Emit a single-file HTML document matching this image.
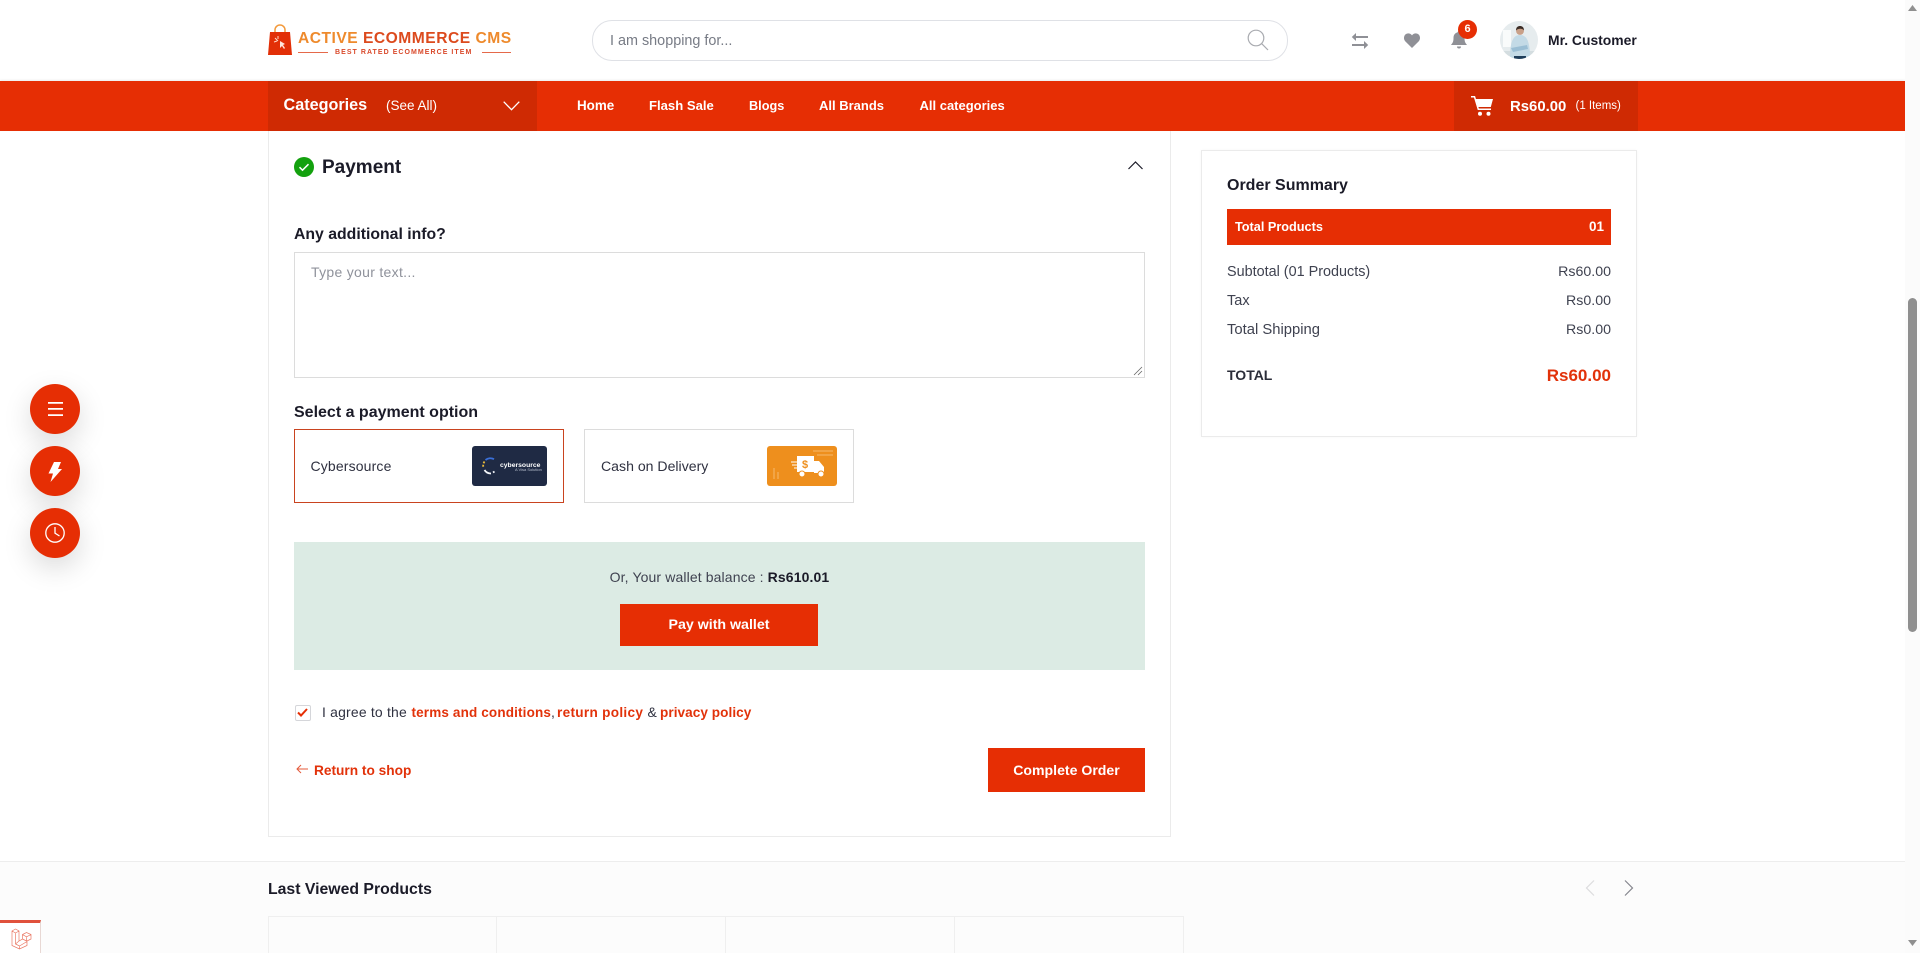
<!DOCTYPE html>
<html lang="en">
<head>
<meta charset="utf-8">
<title>Checkout Payment</title>
<style>
html,body{margin:0;padding:0;width:1920px;height:953px;overflow:hidden;background:#fff}
body{position:relative;font-family:"Liberation Sans",sans-serif;color:#1b1b28}
.a,.t{position:absolute}
.t{white-space:nowrap;line-height:20px;height:20px}
.b{font-weight:700}
.w{color:#fff}
.r{color:#e2320a}
.g{color:#3f4250}
svg{display:block;overflow:visible}
</style>
</head>
<body>
<!-- header -->
<svg class="a" style="left:268px;top:24px" width="24" height="32" viewBox="0 0 24 32">
<path d="M7 9V6a5 5 0 0 1 10 0v3" fill="none" stroke="#f39a3c" stroke-width="1.5"/>
<path d="M2 8h20l2 23H0z" fill="#e22f07"/>
<path d="M7 14l3 3M10 12v3M6 18l3-1" stroke="#ffd9c9" stroke-width="1"/>
<path d="M12 17l5 3-2 1 2 3-1 1-2-3-2 2z" fill="#ffe6dc"/>
</svg>
<div class="t b" style="left:298px;top:29px;font-size:15.6px;letter-spacing:.5px;color:#ee8a2c">ACTIVE <span style="color:#dc4a1d">ECOMMERCE</span> CMS</div>
<div class="a" style="left:298px;top:52px;width:30px;height:1px;background:#e5694a"></div>
<div class="a" style="left:482px;top:52px;width:29px;height:1px;background:#e5694a"></div>
<div class="t b" style="left:335px;top:43px;font-size:7px;letter-spacing:1.05px;color:#d9492b">BEST RATED ECOMMERCE ITEM</div>

<div class="a" style="left:592px;top:20px;width:694px;height:39px;border:1px solid #dfe1e6;border-radius:20px;box-sizing:content-box"></div>
<div class="t" style="left:610px;top:31px;font-size:14.4px;color:#777b85">I am shopping for...</div>
<svg class="a" style="left:1247px;top:29px" width="22" height="22" viewBox="0 0 22 22" fill="none" stroke="#a9abb0" stroke-width="1.2"><circle cx="9" cy="9" r="7.8"/><path d="M14.6 14.6L21 21"/></svg>

<svg class="a" style="left:1351px;top:32px" width="18" height="18" viewBox="0 0 18 18" fill="#8f9096"><path d="M5 1v3h12v2H5v3L.8 5zM13 9v3H1v2h12v3l4.2-4z"/></svg>
<svg class="a" style="left:1404px;top:33px" width="16" height="15" viewBox="0 0 16 15" fill="#8f9096"><path d="M8 15L1.2 8.2C-.6 6.200-.3 3 1.500 1.400 3.600-.4 6.500.2 8 2.400 9.500.2 12.400-.4 14.500 1.400c1.800 1.600 2.100 4.800.3 6.800z"/></svg>
<svg class="a" style="left:1451px;top:31px" width="16" height="19" viewBox="0 0 16 19" fill="#8f9096"><path d="M8 0c.8 0 1.300.6 1.300 1.300C12 2 13.500 4 13.500 7c0 4 1 5 2.500 7H0c1.500-2 2.500-3 2.500-7 0-3 1.500-5 4.200-5.700C6.700.6 7.200 0 8 0zM6 15.500h4a2 2 0 0 1-4 0z"/></svg>
<div class="a" style="left:1458px;top:20px;width:19px;height:19px;border-radius:50%;background:#e62e04"></div>
<div class="a b w" style="left:1458px;top:20px;width:19px;height:19px;line-height:19px;text-align:center;font-size:11px">6</div>

<svg class="a" style="left:1500px;top:21px" width="38" height="38" viewBox="0 0 38 38">
<defs><clipPath id="av"><circle cx="19" cy="19" r="19"/></clipPath></defs>
<g clip-path="url(#av)">
<rect width="38" height="38" fill="#e6ecee"/>
<rect x="3" y="9" width="8" height="17" fill="#f9fbfb"/>
<rect x="0" y="30" width="38" height="8" fill="#d4dde0"/>
<path d="M10 38c0-15 2-24 10-24s10 9 10 24z" fill="#c3dae6"/>
<path d="M11 27l16-3 1 4-15 3z" fill="#9abed4"/>
<circle cx="20" cy="10" r="3.900" fill="#c9a088"/>
<path d="M16 9.500c0-3.500 2-4.500 4-4.500s4 1 4 4.500c-1-1.500-3-1.700-4-1.700s-3 .4-4 1.700z" fill="#3b2c25"/>
<rect x="14" y="35" width="12" height="3" fill="#1e3d5a"/>
</g></svg>
<div class="t b" style="left:1548px;top:30px;font-size:13.9px">Mr. Customer</div>

<!-- nav -->
<div class="a" style="left:0;top:81px;width:1905px;height:50px;background:#e62e04;box-shadow:0 -1px 2px rgba(0,0,0,.08)"></div>
<div class="a" style="left:268px;top:81px;width:269px;height:50px;background:#cf2a03"></div>
<div class="a" style="left:1454px;top:81px;width:184px;height:50px;background:#cf2a03"></div>
<div class="t b w" style="left:283.500px;top:95px;font-size:16.200px">Categories</div>
<div class="t w" style="left:386px;top:96px;font-size:13.500px">(See All)</div>
<svg class="a" style="left:503px;top:101px" width="17" height="10" viewBox="0 0 17 10" fill="none" stroke="#fff" stroke-width="1.300"><path d="M.7.7l7.800 8 7.800-8"/></svg>
<div class="t b w" style="left:577px;top:96px;font-size:13.400px">Home</div>
<div class="t b w" style="left:649px;top:96px;font-size:13.100px">Flash Sale</div>
<div class="t b w" style="left:749px;top:96px;font-size:12.700px">Blogs</div>
<div class="t b w" style="left:819px;top:96px;font-size:13px">All Brands</div>
<div class="t b w" style="left:919.500px;top:96px;font-size:13px">All categories</div>
<svg class="a" style="left:1470.500px;top:96px" width="22" height="20" viewBox="0 0 22 20"><path d="M0 .8h3.500l3.800 12.400H20" fill="none" stroke="#fff" stroke-width="1.500"/><path d="M4.700 3H22l-2.200 8H7.200z" fill="#fff"/><circle cx="9" cy="17.800" r="2" fill="#fff"/><circle cx="17.500" cy="17.800" r="2" fill="#fff"/></svg>
<div class="t b w" style="left:1510px;top:96.500px;font-size:14.900px">Rs60.00</div>
<div class="t w" style="left:1575.500px;top:96px;font-size:11.500px">(1 Items)</div>

<!-- main card -->
<div class="a" style="left:268px;top:131px;width:901px;height:705px;border:1px solid #ebebeb;border-top:0"></div>
<svg class="a" style="left:294px;top:157px" width="20" height="20" viewBox="0 0 20 20"><circle cx="10" cy="10" r="10" fill="#13a10e"/><path d="M5.500 10.200l3 3 6-6" fill="none" stroke="#fff" stroke-width="1.500"/></svg>
<div class="t b" style="left:322px;top:158px;font-size:19px">Payment</div>
<svg class="a" style="left:1128px;top:161px" width="15" height="9" viewBox="0 0 15 9" fill="none" stroke="#1b1b28" stroke-width="1.200"><path d="M.5 8L7.500 1l7 7"/></svg>
<div class="t b" style="left:294px;top:225px;font-size:15.800px">Any additional info?</div>
<div class="a" style="left:294px;top:252px;width:849px;height:124px;border:1px solid #dcdcdc"></div>
<div class="t" style="left:311px;top:262px;font-size:14px;letter-spacing:.3px;color:#8f929b">Type your text...</div>
<svg class="a" style="left:1134px;top:367px" width="8" height="8" viewBox="0 0 8 8" stroke="#666" stroke-width=".8"><path d="M0 8L8 0M4 8L8 4"/></svg>
<div class="t b" style="left:294px;top:403px;font-size:16px">Select a payment option</div>

<div class="a" style="left:294px;top:429px;width:268px;height:72px;border:1px solid #c9431f"></div>
<div class="t" style="left:310.500px;top:456px;font-size:14px;letter-spacing:.15px;color:#2f3140">Cybersource</div>
<div class="a" style="left:472px;top:446px;width:75px;height:40px;border-radius:3px;background:#1f2a44"></div>
<svg class="a" style="left:482px;top:457px" width="16" height="18" viewBox="0 0 16 18" fill="none" stroke-width="1.800"><path d="M12 2.200A7.500 7.500 0 0 0 3.500 3" stroke="#3a6fd8"/><path d="M2.500 4.500A7.500 7.500 0 0 0 1.500 11" stroke="#e9b93a" stroke-dasharray="2 1.500"/><path d="M2.500 13a7.500 7.500 0 0 0 6.500 3.500" stroke="#f4f6fa"/><path d="M11 15.500l1.500-1" stroke="#f4f6fa"/></svg>
<div class="t b w" style="left:500px;top:456px;font-size:6.800px">cybersource</div>
<div class="t" style="left:515px;top:460px;font-size:4px;color:#b8bfce">A Visa Solution</div>

<div class="a" style="left:584px;top:429px;width:268px;height:72px;border:1px solid #dcdcdc"></div>
<div class="t" style="left:601px;top:456px;font-size:14.100px;color:#2f3140">Cash on Delivery</div>
<div class="a" style="left:767px;top:446px;width:70px;height:40px;border-radius:3px;background:#ee8f1d"></div>
<svg class="a" style="left:767px;top:446px" width="70" height="40" viewBox="0 0 70 40"><path d="M46 5h20M50 9h16" stroke="#f4ab53" stroke-width="1.500"/><path d="M7 33V22M11 33V26" stroke="#f4ab53" stroke-width="1.500"/><path d="M30 10h17v16H30z" fill="#fff"/><path d="M47 15h5l5 6v6H47z" fill="#fff"/><path d="M24 16h6M25 19h5M27 22h3" stroke="#fff" stroke-width="1.100"/><circle cx="35" cy="28" r="3" fill="#fff" stroke="#ee8f1d"/><circle cx="54" cy="28" r="3" fill="#fff" stroke="#ee8f1d"/><text x="35" y="22" font-family="Liberation Sans" font-size="11" font-weight="700" fill="#ee8f1d">$</text></svg>

<div class="a" style="left:294px;top:542px;width:851px;height:128px;background:#dcebe4"></div>
<div class="t" style="left:294px;top:567px;width:851px;text-align:center;font-size:14px;letter-spacing:.12px;color:#3f4250">Or, Your wallet balance : <b style="color:#1b1b28">Rs610.01</b></div>
<div class="a b w" style="left:620px;top:604px;width:198px;height:42px;line-height:43px;text-align:center;font-size:14.200px;background:#e62e04">Pay with wallet</div>

<div class="a" style="left:295px;top:705px;width:14px;height:14px;border:1px solid #d5d6da;border-radius:2px"></div>
<svg class="a" style="left:297px;top:707.500px" width="11" height="9" viewBox="0 0 11 9" fill="none" stroke="#e62e04" stroke-width="2"><path d="M1 4.500l3 3 6-6.500"/></svg>
<div class="t" style="left:322px;top:701.500px;font-size:13.950px;letter-spacing:.2px;color:#2f3140">I agree to the</div>
<div class="t b r" style="left:411.500px;top:702.500px;font-size:13.500px;letter-spacing:.15px">terms and conditions</div>
<div class="t" style="left:551px;top:701.500px;font-size:13.950px;color:#2f3140">,</div>
<div class="t b r" style="left:557px;top:702.500px;font-size:13.600px;letter-spacing:.3px">return policy</div>
<div class="t" style="left:647.500px;top:701.500px;font-size:13.950px;color:#2f3140">&amp;</div>
<div class="t b r" style="left:660px;top:702.500px;font-size:13.600px;letter-spacing:.05px">privacy policy</div>
<svg class="a" style="left:296px;top:764px" width="12" height="10" viewBox="0 0 12 10" fill="none" stroke="#e4593a" stroke-width="1"><path d="M12 5H1M5 1L1 5l4 4"/></svg>
<div class="t b r" style="left:314px;top:760.500px;font-size:13.700px">Return to shop</div>
<div class="a b w" style="left:988px;top:748px;width:157px;height:44px;line-height:44px;text-align:center;font-size:14.100px;background:#e62e04">Complete Order</div>

<!-- summary -->
<div class="a" style="left:1201px;top:150px;width:434px;height:285px;border:1px solid #ebebeb;box-shadow:0 0 3px rgba(0,0,0,.03)"></div>
<div class="t b" style="left:1227px;top:176px;font-size:16px">Order Summary</div>
<div class="a" style="left:1227px;top:209px;width:384px;height:36px;background:#e62e04"></div>
<div class="t b w" style="left:1235px;top:217px;font-size:12.700px">Total Products</div>
<div class="t b w" style="left:1589px;top:216.500px;font-size:13.500px">01</div>
<div class="t g" style="left:1227px;top:262px;font-size:14.400px">Subtotal (01 Products)</div>
<div class="t g" style="right:309px;top:262px;font-size:14.200px">Rs60.00</div>
<div class="t g" style="left:1227px;top:291px;font-size:14.500px">Tax</div>
<div class="t g" style="right:309px;top:291px;font-size:14.200px">Rs0.00</div>
<div class="t g" style="left:1227px;top:320px;font-size:14.800px">Total Shipping</div>
<div class="t g" style="right:309px;top:320px;font-size:14.200px">Rs0.00</div>
<div class="t b" style="left:1227px;top:364.500px;font-size:14px;color:#2b2d39">TOTAL</div>
<div class="t b r" style="right:309px;top:366px;font-size:17px">Rs60.00</div>

<!-- last viewed -->
<div class="a" style="left:0;top:861px;width:1905px;height:92px;background:#fcfcfc;border-top:1px solid #ededed;box-sizing:border-box"></div>
<div class="t b" style="left:268px;top:879.500px;font-size:15.800px">Last Viewed Products</div>
<svg class="a" style="left:1585px;top:880px" width="10" height="16" viewBox="0 0 10 16" fill="none" stroke="#dcdcde" stroke-width="1.200"><path d="M9 .5L1.500 8 9 15.500"/></svg>
<svg class="a" style="left:1624px;top:879.500px" width="10" height="16" viewBox="0 0 10 16" fill="none" stroke="#85868e" stroke-width="1.200"><path d="M1 .5L8.500 8 1 15.500"/></svg>
<div class="a" style="left:268px;top:916px;width:916px;height:37px;border:1px solid #efefef;border-bottom:0;box-sizing:border-box"></div>
<div class="a" style="left:496px;top:916px;width:1px;height:37px;background:#efefef"></div>
<div class="a" style="left:725px;top:916px;width:1px;height:37px;background:#efefef"></div>
<div class="a" style="left:954px;top:916px;width:1px;height:37px;background:#efefef"></div>

<!-- floating -->
<div class="a" style="left:30px;top:384px;width:50px;height:50px;border-radius:50%;background:#e62e04;box-shadow:0 10px 28px rgba(0,0,0,.15)"></div>
<div class="a" style="left:30px;top:446px;width:50px;height:50px;border-radius:50%;background:#e62e04;box-shadow:0 10px 28px rgba(0,0,0,.15)"></div>
<div class="a" style="left:30px;top:508px;width:50px;height:50px;border-radius:50%;background:#e62e04;box-shadow:0 10px 28px rgba(0,0,0,.15)"></div>
<svg class="a" style="left:48px;top:402px" width="15" height="14" viewBox="0 0 15 14" fill="#fff"><path d="M0 0h15v1.700H0zM0 6h15v1.700H0zM0 12.300h15V14H0z"/></svg>
<svg class="a" style="left:48px;top:462px" width="14" height="20" viewBox="0 0 14 20" fill="#fff"><path d="M6 0h7L10 7h4L2.500 20 5 11.500H.5z"/></svg>
<svg class="a" style="left:45px;top:523px" width="20" height="20" viewBox="0 0 20 20" fill="none" stroke="#fff" stroke-width="1.300"><circle cx="10" cy="10" r="9.200"/><path d="M10 4v6.200l4.500 2.800"/></svg>

<!-- debugbar -->
<div class="a" style="left:0;top:920px;width:41px;height:33px;background:#fff;border-right:1px solid #e8d8d4;border-top:3px solid #e0513c;box-sizing:border-box"></div>
<svg class="a" style="left:11px;top:928px" width="21" height="21" viewBox="0 0 21 21" fill="none" stroke="#ea7a66" stroke-width=".7"><path d="M1 3L4.500 1 8 3v10l3.500-2V6.500l4-2L20 6.500V11l-4 2v4.500L8.500 21 1 17.500zM1 3l3.500 2L8 3M4.500 5v11l4 2 7.500-4.500M8 13l-3.500 3M11.500 6.500l4 2.300 4.500-2.300M15.500 8.800V13M11.500 11l4 2M8.500 18v3"/></svg>

<!-- scrollbar -->
<div class="a" style="left:1905px;top:0;width:15px;height:953px;background:#fbfbfb"></div>
<div class="a" style="left:1908px;top:298px;width:9px;height:334px;border-radius:4.500px;background:#8f8f8f"></div>
<svg class="a" style="left:1908px;top:5px" width="9" height="6" viewBox="0 0 9 6" fill="#8f8f8f"><path d="M4.500 0L9 6H0z"/></svg>
<svg class="a" style="left:1908px;top:940px" width="9" height="6" viewBox="0 0 9 6" fill="#8f8f8f"><path d="M0 0h9L4.500 6z"/></svg>
</body>
</html>
